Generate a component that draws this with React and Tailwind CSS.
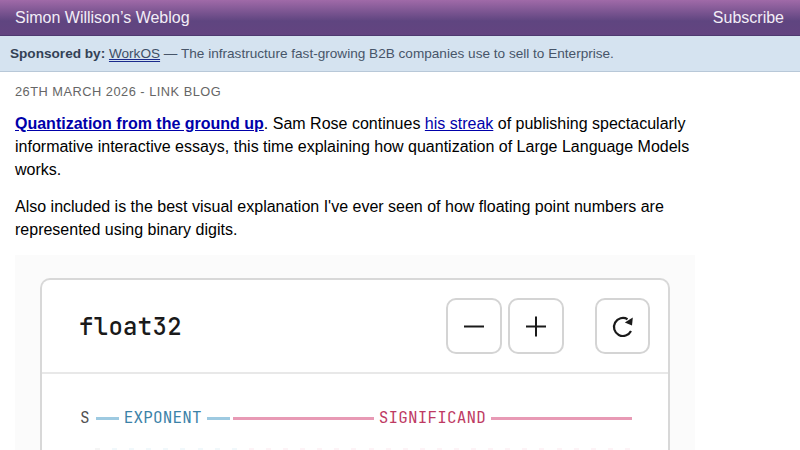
import React from "react";

function Minus() {
  return (
    <svg width="24" height="24" viewBox="0 0 24 24" fill="none" stroke="#1a1a1a" strokeWidth="2">
      <path d="M2 12.500H22" />
    </svg>
  );
}
function Plus() {
  return (
    <svg width="24" height="24" viewBox="0 0 24 24" fill="none" stroke="#1a1a1a" strokeWidth="2">
      <path d="M2 12.500H22M12 2.500V22.500" />
    </svg>
  );
}
function Reset() {
  return (
    <svg width="24" height="24" viewBox="0 0 24 24" fill="none" stroke="#1a1a1a" strokeWidth="2.200">
      <path d="M20 17A9 9 0 1 1 16.500 5.200" />
      <path d="M21.800 3.500L21 11.500L13.800 8.500Z" fill="#1a1a1a" stroke="none" />
    </svg>
  );
}

function IconButton({ children, width = "w-[56px]" }) {
  return (
    <div className={`${width} h-[56px] flex items-center justify-center rounded-[10px] border-2 border-[#d4d4d4] bg-white`}>
      {children}
    </div>
  );
}

const mono = "font-['JetBrains_Mono','DejaVu_Sans_Mono','Liberation_Mono',monospace]";

const expBits = ["S", ...Array(8).fill("E"), ...Array(23).fill("M")];

export default function App() {
  return (
    <div className="h-[450px] w-[800px] overflow-hidden bg-white font-['Liberation_Sans',Arial,sans-serif] text-black">
      <header className="h-[36px] flex items-center justify-between pl-[15px] pr-[16px] text-[16px] text-[#f3edf7] bg-[linear-gradient(180deg,#a06aa8_0%,#5f4580_60%,#634480_100%)] border-b border-[#4f3a70]">
        <span>Simon Willison’s Weblog</span>
        <span>Subscribe</span>
      </header>
      <div className="h-[36px] flex items-center px-[10px] pt-[1px] text-[13.6px] text-[#475569] bg-[#d5e3f0] border-b border-[#b8c8d8]">
        <span>
          <strong className="text-[#334155]">Sponsored by:</strong>{" "}
          <a className="text-[#3f4f66] underline decoration-[#1a2a8c] [text-decoration-style:double]">WorkOS</a> — The infrastructure fast-growing B2B companies use to sell to Enterprise.
        </span>
      </div>
      <main className="px-[15px] pt-[12px]">
        <p className="text-[12.8px] leading-[15px] tracking-[0.5px] text-[#666] uppercase">26th March 2026 - Link Blog</p>
        <p className="mt-[13px] w-[680px] text-[16px] leading-[23px]">
          <a className="font-bold text-[#0000aa] underline">Quantization from the ground up</a>. Sam Rose continues{" "}
          <a className="text-[#0000aa] underline">his streak</a> of publishing spectacularly informative interactive essays, this time explaining how quantization of Large Language Models works.
        </p>
        <p className="mt-[14px] w-[680px] text-[16px] leading-[23px]">
          Also included is the best visual explanation I've ever seen of how floating point numbers are represented using binary digits.
        </p>
        <div className="mt-[14px] w-[680px] h-[300px] bg-[#fbfbfb] px-[25px] pt-[23px]">
          <div className={`${mono} h-[300px] rounded-t-[10px] border-2 border-b-0 border-[#d8d8d8] bg-white`}>
            <div className="h-[94px] flex items-center justify-between pl-[37px] pr-[18px] border-b-2 border-[#e8e8e8]">
              <span className="mt-[2px] text-[24px] tracking-[0.3px] font-medium text-[#1a1a1a]">float32</span>
              <div className="flex items-center">
                <IconButton><Minus /></IconButton>
                <div className="w-[6px]" />
                <IconButton><Plus /></IconButton>
                <div className="w-[31px]" />
                <IconButton width="w-[55px]"><Reset /></IconButton>
              </div>
            </div>
            <div className="flex items-center pl-[38px] pr-[36px] pt-[35px] text-[16px] leading-[18px] tracking-[0.15px]">
              <span className="text-[#525252]">S</span>
              <span className="ml-[6px] w-[23px] h-[3px] bg-[#9ecae1]" />
              <span className="mx-[5px] text-[#3b82a8]">EXPONENT</span>
              <span className="w-[23px] h-[3px] bg-[#9ecae1]" />
              <span className="ml-[3px] flex-1 h-[3px] bg-[#e89ab5]" />
              <span className="mx-[5px] text-[#be3a63]">SIGNIFICAND</span>
              <span className="flex-1 h-[3px] bg-[#e89ab5]" />
            </div>
            <div className="mt-[21px] flex justify-between pl-[53px] pr-[38px]">
              {expBits.map((b, i) => (
                <span
                  key={i}
                  className={`w-[5px] h-[2px] ${b === "M" ? "bg-[#fdf3f6]" : b === "E" ? "bg-[#f1f8fb]" : "bg-[#f5f5f5]"}`}
                />
              ))}
            </div>
          </div>
        </div>
      </main>
    </div>
  );
}
